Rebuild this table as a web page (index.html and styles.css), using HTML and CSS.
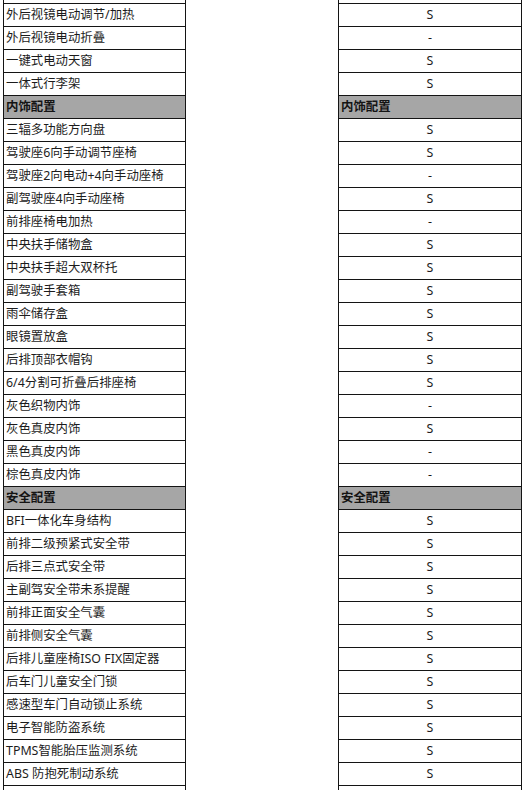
FILE: index.html
```html
<!DOCTYPE html>
<html lang="zh-CN">
<head>
<meta charset="utf-8">
<title>配置表</title>
<link rel="stylesheet" href="styles.css">
</head>
<body>
<div class="sheet">
  <table class="spec names">
    <tbody>
      <tr><td></td></tr>
      <tr><td>外后视镜电动调节/加热</td></tr>
      <tr><td>外后视镜电动折叠</td></tr>
      <tr><td>一键式电动天窗</td></tr>
      <tr><td>一体式行李架</td></tr>
      <tr class="group"><td>内饰配置</td></tr>
      <tr><td>三辐多功能方向盘</td></tr>
      <tr><td>驾驶座6向手动调节座椅</td></tr>
      <tr><td>驾驶座2向电动+4向手动座椅</td></tr>
      <tr><td>副驾驶座4向手动座椅</td></tr>
      <tr><td>前排座椅电加热</td></tr>
      <tr><td>中央扶手储物盒</td></tr>
      <tr><td>中央扶手超大双杯托</td></tr>
      <tr><td>副驾驶手套箱</td></tr>
      <tr><td>雨伞储存盒</td></tr>
      <tr><td>眼镜置放盒</td></tr>
      <tr><td>后排顶部衣帽钩</td></tr>
      <tr><td>6/4分割可折叠后排座椅</td></tr>
      <tr><td>灰色织物内饰</td></tr>
      <tr><td>灰色真皮内饰</td></tr>
      <tr><td>黑色真皮内饰</td></tr>
      <tr><td>棕色真皮内饰</td></tr>
      <tr class="group"><td>安全配置</td></tr>
      <tr><td>BFI一体化车身结构</td></tr>
      <tr><td>前排二级预紧式安全带</td></tr>
      <tr><td>后排三点式安全带</td></tr>
      <tr><td>主副驾安全带未系提醒</td></tr>
      <tr><td>前排正面安全气囊</td></tr>
      <tr><td>前排侧安全气囊</td></tr>
      <tr><td>后排儿童座椅ISO FIX固定器</td></tr>
      <tr><td>后车门儿童安全门锁</td></tr>
      <tr><td>感速型车门自动锁止系统</td></tr>
      <tr><td>电子智能防盗系统</td></tr>
      <tr><td>TPMS智能胎压监测系统</td></tr>
      <tr><td>ABS 防抱死制动系统</td></tr>
      <tr><td></td></tr>
    </tbody>
  </table>
  <table class="spec values">
    <tbody>
      <tr><td></td></tr>
      <tr><td>S</td></tr>
      <tr><td>-</td></tr>
      <tr><td>S</td></tr>
      <tr><td>S</td></tr>
      <tr class="group"><td>内饰配置</td></tr>
      <tr><td>S</td></tr>
      <tr><td>S</td></tr>
      <tr><td>-</td></tr>
      <tr><td>S</td></tr>
      <tr><td>-</td></tr>
      <tr><td>S</td></tr>
      <tr><td>S</td></tr>
      <tr><td>S</td></tr>
      <tr><td>S</td></tr>
      <tr><td>S</td></tr>
      <tr><td>S</td></tr>
      <tr><td>S</td></tr>
      <tr><td>-</td></tr>
      <tr><td>S</td></tr>
      <tr><td>-</td></tr>
      <tr><td>-</td></tr>
      <tr class="group"><td>安全配置</td></tr>
      <tr><td>S</td></tr>
      <tr><td>S</td></tr>
      <tr><td>S</td></tr>
      <tr><td>S</td></tr>
      <tr><td>S</td></tr>
      <tr><td>S</td></tr>
      <tr><td>S</td></tr>
      <tr><td>S</td></tr>
      <tr><td>S</td></tr>
      <tr><td>S</td></tr>
      <tr><td>S</td></tr>
      <tr><td>S</td></tr>
      <tr><td></td></tr>
    </tbody>
  </table>
</div>
</body>
</html>
```

FILE: styles.css
```css
html, body {
  margin: 0;
  padding: 0;
  background: #ffffff;
}

body {
  width: 526px;
  height: 790px;
  overflow: hidden;
  font-family: "Noto Sans", "Noto Sans CJK SC", sans-serif;
  font-size: 12.4px;
  color: #1c1c1c;
}

.sheet {
  display: flex;
  gap: 152px;
  padding-left: 3px;
  margin-top: -19px;
  align-items: flex-start;
}

.spec {
  border-collapse: separate;
  border-spacing: 0;
  table-layout: fixed;
  border-left: 1px solid #141414;
}

.names {
  width: 183px;
}

.values {
  width: 184px;
}

.spec td {
  height: 22px;
  padding: 0 0 0 2px;
  border-right: 1px solid #141414;
  border-bottom: 1px solid #141414;
  white-space: nowrap;
  overflow: hidden;
  vertical-align: middle;
  line-height: 22px;
  box-sizing: content-box;
}

.values td {
  text-align: center;
  padding: 0;
}

.spec .group td {
  background: #a6a6a6;
  font-weight: 700;
  color: #141414;
  text-align: left;
  padding-left: 2px;
}
```
